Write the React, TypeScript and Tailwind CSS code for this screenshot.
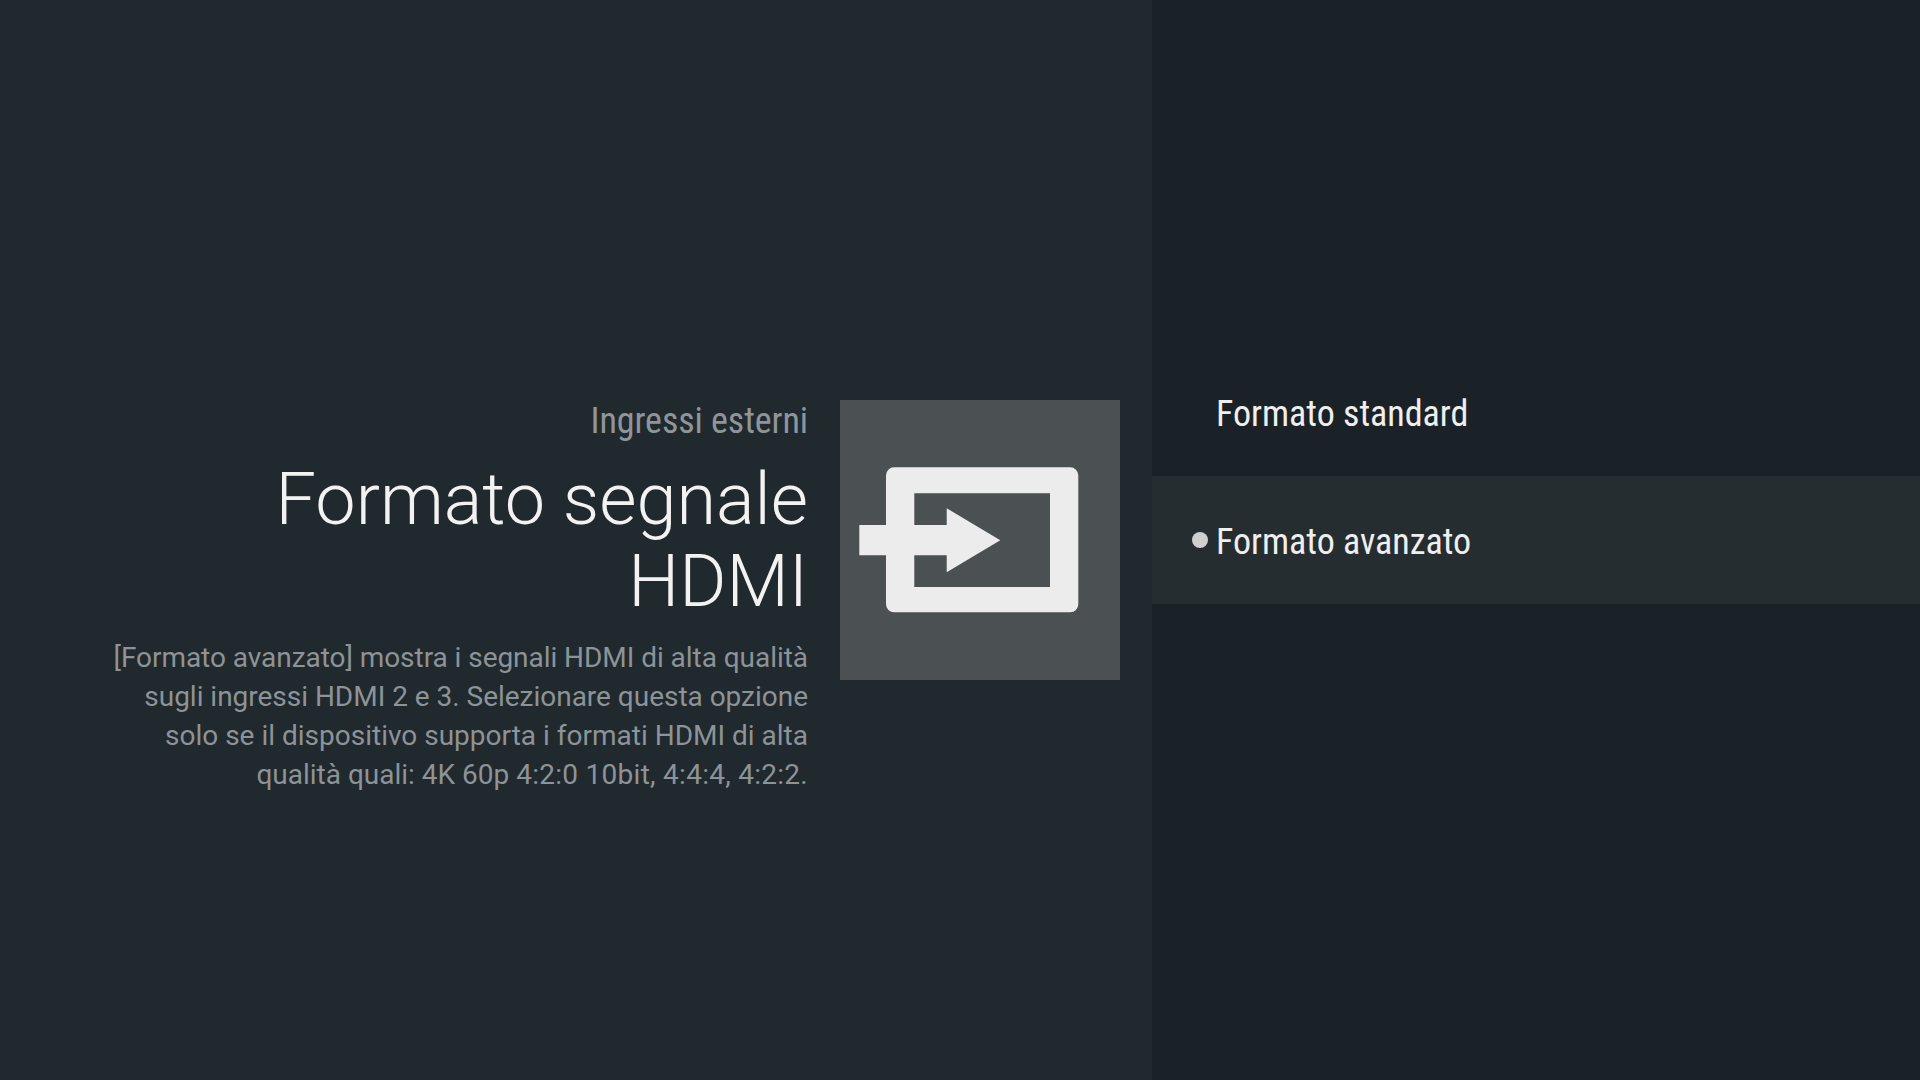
export default function App() {
  return (
    <div className="flex h-[1080px] w-[1920px] overflow-hidden bg-[#20292e] font-['Roboto',sans-serif]">
      <div className="flex w-[1152px] shrink-0 items-start justify-end pt-[400px] pr-[32px]">
        <div className="flex w-[780px] flex-col items-end text-right">
          <div className="mt-[1px] text-[36px] leading-[40px] tracking-[-0.07px] text-[#8f9598] [font-stretch:75%]">Ingressi esterni</div>
          <h1 className="mt-[18px] text-[72px] leading-[82px] font-light text-[#f2f2f2]">
            Formato segnale
            <br />
            HDMI
          </h1>
          <p className="mt-[15px] text-[28px] leading-[39px] text-[#8d9396]">
            <span className="tracking-[-0.05px]">[Formato avanzato] mostra i segnali HDMI di alta qualità</span>
            <br />
            <span className="tracking-[-0.02px]">sugli ingressi HDMI 2 e 3. Selezionare questa opzione</span>
            <br />
            solo se il dispositivo supporta i formati HDMI di alta
            <br />
            qualità quali: 4K 60p <span className="tracking-[0.27px]">4:2:0 10bit, 4:4:4, 4:2:2.</span>
          </p>
        </div>
        <div className="ml-[32px] h-[280px] w-[280px] shrink-0 bg-[#4b5053]">
          <svg width="280" height="280" viewBox="0 0 280 280">
            <path
              fillRule="evenodd"
              fill="#ececec"
              d="M54 67.3H230.3a8 8 0 0 1 8 8V204.3a8 8 0 0 1-8 8H54a8 8 0 0 1-8-8V155.3H19.3V125H46V75.3a8 8 0 0 1 8-8ZM74.3 93.3V125H106.7V108.3L160.3 140.3L106.7 172.3V155.3H74.3V187H210V93.3Z"
            />
          </svg>
        </div>
      </div>
      <div className="flex-1 bg-[#1b2227] pt-[350px]">
        <div className="flex h-[126px] items-center pt-[2px] pl-[64px]">
          <span className="text-[36px] leading-[40px] text-[#efefef] [font-stretch:75%]">Formato standard</span>
        </div>
        <div className="relative flex h-[128px] items-center bg-[#262d30] pt-[4px] pl-[64px]">
          <span className="absolute top-[56px] left-[40px] h-[16px] w-[16px] rounded-full bg-[#cfcfcf]" />
          <span className="text-[36px] leading-[40px] text-[#efefef] [font-stretch:75%]">Formato avanzato</span>
        </div>
      </div>
    </div>
  );
}
